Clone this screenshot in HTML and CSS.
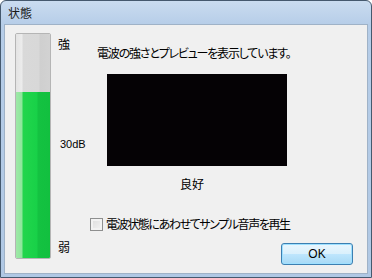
FILE: index.html
```html
<!DOCTYPE html>
<html lang="ja">
<head>
  <meta charset="UTF-8">
  <title>状態</title>
  <link rel="stylesheet" href="styles.css">
</head>
<body>
  <div class="window">
    <div class="titlebar">
      <span class="title">状態</span>
    </div>
    <div class="client">
      <div class="meter">
        <div class="meter-empty"></div>
        <div class="meter-fill"></div>
      </div>
      <div class="meter-labels">
        <span>強</span>
        <span class="db">30dB</span>
        <span>弱</span>
      </div>
      <div class="panel">
        <p class="desc">電波の強さとプレビューを表示しています。</p>
        <div class="preview"></div>
        <p class="quality">良好</p>
        <label class="check-row">
          <span class="checkbox"></span>
          <span>電波状態にあわせてサンプル音声を再生</span>
        </label>
        <div class="buttons">
          <button class="ok-btn">OK</button>
        </div>
      </div>
    </div>
  </div>
</body>
</html>
```

FILE: styles.css
```css
html, body {
  margin: 0;
  padding: 0;
}
body {
  width: 372px;
  height: 278px;
  font-family: "Noto Sans CJK JP", "Noto Sans", sans-serif;
  font-size: 12px;
  color: #000;
  background: #fff;
}
.window {
  box-sizing: border-box;
  width: 372px;
  height: 278px;
  display: flex;
  flex-direction: column;
  border: 1px solid #45596e;
  border-radius: 6px 6px 0 0;
  background: linear-gradient(to bottom, #cadcf0 0, #b6cde8 24px, #b0c8e4 100%);
  padding: 0 3px 3px 3px;
}
.titlebar {
  height: 23px;
  display: flex;
  align-items: center;
  padding-left: 4px;
}
.title {
  font-size: 12px;
  color: #1a1a1a;
}
.client {
  flex: 1;
  display: flex;
  background: #f0f0f0;
  border: 1px solid #9fb2c7;
  padding: 8px 14px 8px 10px;
}
.meter {
  box-sizing: border-box;
  width: 36px;
  height: 226px;
  display: flex;
  flex-direction: column;
  border: 1px solid #b5b5b5;
  border-radius: 2px;
  overflow: hidden;
}
.meter-empty {
  height: 58px;
  background: linear-gradient(to right, #e4e4e4 0, #ececec 6px, #d9d9d9 7px, #d8d8d8 23px, #cfcfcf 24px, #d2d2d2 100%);
}
.meter-fill {
  flex: 1;
  background: linear-gradient(to right, #9fe9a8 0, #8ee59c 6px, #22d54c 7px, #18d148 21px, #14c241 22px, #12c03f 100%);
}
.meter-labels {
  height: 226px;
  display: flex;
  flex-direction: column;
  justify-content: space-between;
  margin-left: 7px;
  width: 28px;
  line-height: 16px;
  padding: 3px 0 4px 0;
  box-sizing: border-box;
}
.meter-labels .db {
  font-family: "Liberation Sans", sans-serif;
  font-size: 11px;
  margin: -3px 0 0 2px;
}
.panel {
  flex: 1;
  display: flex;
  flex-direction: column;
  margin-left: 4px;
}
.desc {
  margin: 12px 0 0 7px;
  line-height: 16px;
  font-feature-settings: "palt";
  letter-spacing: -1.2px;
}
.preview {
  width: 180px;
  height: 92px;
  margin: 13px 0 0 17px;
  background: #050205;
}
.quality {
  width: 170px;
  margin: 10px 0 0 17px;
  line-height: 16px;
  text-align: center;
}
.check-row {
  display: flex;
  align-items: center;
  gap: 3px;
  margin-top: 24px;
  line-height: 16px;
  font-feature-settings: "palt";
  letter-spacing: -1.4px;
}
.checkbox {
  box-sizing: border-box;
  width: 13px;
  height: 13px;
  border: 1px solid #8e8f8f;
  background: linear-gradient(135deg, #dcdcdc 0, #f4f4f4 100%);
  box-shadow: inset 0 0 0 2px #f2f2f2;
}
.buttons {
  margin-top: auto;
  display: flex;
  justify-content: flex-end;
}
.ok-btn {
  width: 72px;
  height: 22px;
  border: 1px solid #3c7fb1;
  border-radius: 3px;
  background: linear-gradient(to bottom, #eaf6fd 0, #d9f0fc 50%, #bee6fd 51%, #a7d9f5 100%);
  box-shadow: inset 0 0 0 1px #9ee0ff;
  font-family: "Liberation Sans", sans-serif;
  font-size: 12px;
  color: #000;
  padding: 0;
}
```
